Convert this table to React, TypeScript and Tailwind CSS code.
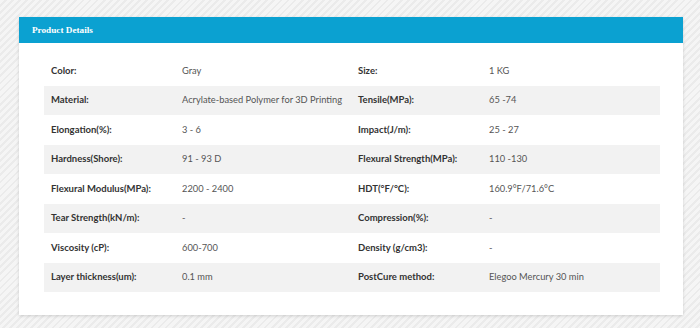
const rows: [string, string, string, string][] = [
  ["Color:", "Gray", "Size:", "1 KG"],
  ["Material:", "Acrylate-based Polymer for 3D Printing", "Tensile(MPa):", "65 -74"],
  ["Elongation(%):", "3 - 6", "Impact(J/m):", "25 - 27"],
  ["Hardness(Shore):", "91 - 93 D", "Flexural Strength(MPa):", "110 -130"],
  ["Flexural Modulus(MPa):", "2200 - 2400", "HDT(°F/°C):", "160.9°F/71.6°C"],
  ["Tear Strength(kN/m):", "-", "Compression(%):", "-"],
  ["Viscosity (cP):", "600-700", "Density (g/cm3):", "-"],
  ["Layer thickness(um):", "0.1 mm", "PostCure method:", "Elegoo Mercury 30 min"],
];

export default function App() {
  return (
    <div className="h-[328px] w-[700px] overflow-hidden bg-[#f1f1f1] bg-[repeating-linear-gradient(135deg,#f5f5f5_0px,#f5f5f5_3px,#ebebeb_3px,#ebebeb_5px)] pt-[17px] pl-[19px] pr-[17px] font-['Lato',sans-serif]">
      {/* Tarjeta de detalles */}
      <div className="bg-white shadow-[0_1px_3px_rgba(0,0,0,0.15)]">
        <div className="flex h-[26px] items-center bg-[#0ba1d1] px-[13px] pt-[1px]">
          <h2 className="font-['Liberation_Serif',serif] text-[9.2px] font-bold text-white">
            Product Details
          </h2>
        </div>
        <div className="pt-[13px] pr-[23px] pb-[23px] pl-[25px]">
          <div className="grid grid-cols-[131px_176px_131px_1fr]">
            {rows.map((r, i) => (
              <div
                key={i}
                className={`col-span-4 grid grid-cols-subgrid h-[29.5px] items-center whitespace-nowrap ${
                  i % 2 === 1 ? "bg-[#f2f2f2]" : "bg-white"
                }`}
              >
                <span className="pl-[7px] text-[9.5px] font-bold text-[#333]">{r[0]}</span>
                <span className="pl-[7px] text-[9.3px] text-[#555]">{r[1]}</span>
                <span className="pl-[7px] text-[9.5px] font-bold text-[#333]">{r[2]}</span>
                <span className="pl-[7px] text-[9.3px] text-[#555]">{r[3]}</span>
              </div>
            ))}
          </div>
        </div>
      </div>
    </div>
  );
}
